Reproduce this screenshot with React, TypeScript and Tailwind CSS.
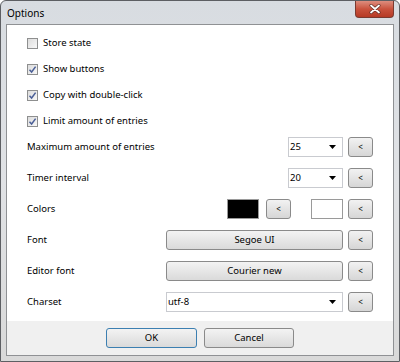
import React from "react";

const font = { fontFamily: '"Noto Sans", "Open Sans", sans-serif' };

function Check({ checked, label }: { checked: boolean; label: string }) {
  return (
    <div className="flex h-[26px] items-center">
      <div className="flex h-[11px] w-[11px] items-center justify-center border border-[#8e8f8f] bg-gradient-to-br from-[#dcdcdc] to-[#f8f8f8]">
        {checked && (
          <svg width="9" height="9" viewBox="0 0 9 9">
            <path d="M1.5 4.8 L3.6 7 L7.6 1.6" fill="none" stroke="#4a5f97" strokeWidth="1.5" />
          </svg>
        )}
      </div>
      <span className="ml-[5px] text-[9.5px] text-black">{label}</span>
    </div>
  );
}

function Back() {
  return (
    <div className="flex h-[20px] w-[25px] shrink-0 items-center justify-center rounded-[3px] border border-[#8a8a8a] bg-gradient-to-b from-[#f2f2f2] to-[#d6d6d6] text-[8px] leading-none text-black">
      &lt;
    </div>
  );
}

function Select({ value, w }: { value: string; w: string }) {
  return (
    <div className={`flex h-[20px] ${w} items-center justify-between border border-[#c9cbd0] bg-white pl-[1px] pr-[6px]`}>
      <span className="text-[9.5px] text-black">{value}</span>
      <svg width="7" height="4" viewBox="0 0 7 4">
        <path d="M0 0 H7 L3.5 4 Z" fill="#000" />
      </svg>
    </div>
  );
}

function Btn({ label, w, def }: { label: string; w: string; def?: boolean }) {
  return (
    <div
      className={`flex h-[20px] ${w} items-center justify-center rounded-[3px] border ${
        def ? "border-[#3c7fb1]" : "border-[#8a8a8a]"
      } bg-gradient-to-b from-[#f3f3f3] to-[#dadada] text-[9.5px] text-black`}
    >
      {label}
    </div>
  );
}

function Row({ label, children }: { label: string; children?: React.ReactNode }) {
  return (
    <div className="flex h-[20px] items-center">
      <span className="flex-1 text-[9.5px] text-black">{label}</span>
      {children}
    </div>
  );
}

export default function App() {
  return (
    <div style={font} className="h-[362px] w-[400px] overflow-hidden bg-white">
      <div className="flex h-[362px] w-[400px] flex-col rounded-t-[6px] border border-[#5d5f63] bg-gradient-to-b from-[#d8dce1] via-[#e0e2e5] to-[#d9d9d9]">
        {/* Title bar */}
        <div className="flex h-[23px] items-start">
          <span className="ml-[6px] mt-[5px] text-[10px] text-black">Options</span>
          <div className="ml-auto mr-[5px] flex h-[17px] w-[39px] items-center justify-center rounded-b-[4px] border border-t-0 border-[#7a3a30] bg-gradient-to-b from-[#dd8d7e] via-[#c9523d] to-[#b63a25]">
            <svg width="12" height="10" viewBox="0 0 12 10">
              <path d="M2 1.5 L10 8.5 M10 1.5 L2 8.5" stroke="#5a2a22" strokeWidth="3" strokeLinecap="round" />
              <path d="M2 1.5 L10 8.5 M10 1.5 L2 8.5" stroke="#ffffff" strokeWidth="1.8" strokeLinecap="round" />
            </svg>
          </div>
        </div>
        {/* Client */}
        <div className="mx-[5px] flex flex-col border border-[#8f9194] bg-white">
          <div className="flex flex-col px-[20px] pb-[9px] pt-[5px]">
            <Check checked={false} label="Store state" />
            <Check checked label="Show buttons" />
            <Check checked label="Copy with double-click" />
            <Check checked label="Limit amount of entries" />
            <div className="mt-[3px] flex flex-col gap-[11px]">
              <Row label="Maximum amount of entries">
                <Select value="25" w="w-[55px]" />
                <div className="w-[5px]" />
                <Back />
              </Row>
              <Row label="Timer interval">
                <Select value="20" w="w-[55px]" />
                <div className="w-[5px]" />
                <Back />
              </Row>
              <Row label="Colors">
                <div className="h-[20px] w-[32px] border border-[#9a9a9a] bg-black" />
                <div className="w-[7px]" />
                <Back />
                <div className="w-[20px]" />
                <div className="h-[20px] w-[32px] border border-[#9a9a9a] bg-white" />
                <div className="w-[5px]" />
                <Back />
              </Row>
              <Row label="Font">
                <Btn label="Segoe UI" w="w-[177px]" />
                <div className="w-[5px]" />
                <Back />
              </Row>
              <Row label="Editor font">
                <Btn label="Courier new" w="w-[177px]" />
                <div className="w-[5px]" />
                <Back />
              </Row>
              <Row label="Charset">
                <Select value="utf-8" w="w-[177px]" />
                <div className="w-[5px]" />
                <Back />
              </Row>
            </div>
          </div>
          <div className="flex h-[34px] items-center justify-center gap-[7px] bg-[#f0f0f0]">
            <Btn label="OK" w="w-[91px]" def />
            <Btn label="Cancel" w="w-[90px]" />
          </div>
        </div>
      </div>
    </div>
  );
}
